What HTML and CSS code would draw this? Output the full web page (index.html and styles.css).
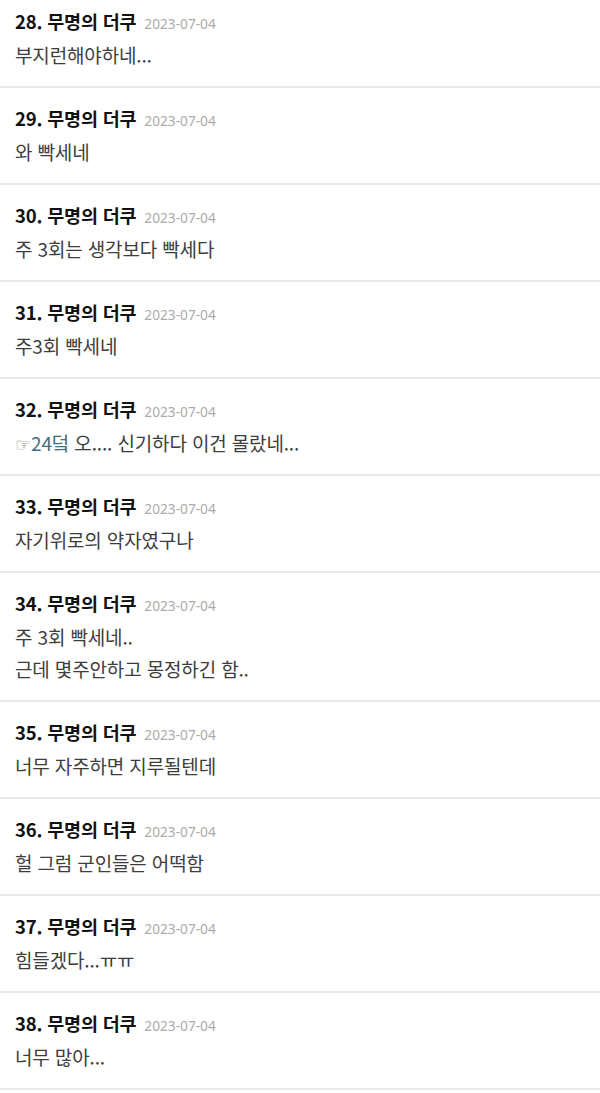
FILE: index.html
```html
<!DOCTYPE html>
<html lang="ko">
<head>
<meta charset="utf-8">
<link rel="stylesheet" href="styles.css">
</head>
<body>
<ul class="comments">
  <li class="comment"><div class="head"><span class="name">28. 무명의 더쿠</span><span class="date">2023-07-04</span></div><div class="body">부지런해야하네...</div></li>
  <li class="comment"><div class="head"><span class="name">29. 무명의 더쿠</span><span class="date">2023-07-04</span></div><div class="body">와 빡세네</div></li>
  <li class="comment"><div class="head"><span class="name">30. 무명의 더쿠</span><span class="date">2023-07-04</span></div><div class="body">주 3회는 생각보다 빡세다</div></li>
  <li class="comment"><div class="head"><span class="name">31. 무명의 더쿠</span><span class="date">2023-07-04</span></div><div class="body">주3회 빡세네</div></li>
  <li class="comment"><div class="head"><span class="name">32. 무명의 더쿠</span><span class="date">2023-07-04</span></div><div class="body"><span class="ref"><span class="hand">☞</span>24덬</span> 오.... 신기하다 이건 몰랐네...</div></li>
  <li class="comment"><div class="head"><span class="name">33. 무명의 더쿠</span><span class="date">2023-07-04</span></div><div class="body">자기위로의 약자였구나</div></li>
  <li class="comment"><div class="head"><span class="name">34. 무명의 더쿠</span><span class="date">2023-07-04</span></div><div class="body">주 3회 빡세네..<br>근데 몇주안하고 몽정하긴 함..</div></li>
  <li class="comment"><div class="head"><span class="name">35. 무명의 더쿠</span><span class="date">2023-07-04</span></div><div class="body">너무 자주하면 지루될텐데</div></li>
  <li class="comment"><div class="head"><span class="name">36. 무명의 더쿠</span><span class="date">2023-07-04</span></div><div class="body">헐 그럼 군인들은 어떡함</div></li>
  <li class="comment"><div class="head"><span class="name">37. 무명의 더쿠</span><span class="date">2023-07-04</span></div><div class="body">힘들겠다...ㅠㅠ</div></li>
  <li class="comment"><div class="head"><span class="name">38. 무명의 더쿠</span><span class="date">2023-07-04</span></div><div class="body">너무 많아...</div></li>
</ul>
</body>
</html>
```

FILE: styles.css
```css
html, body {
  margin: 0;
  padding: 0;
  background: #ffffff;
}
body {
  font-family: "Noto Sans CJK KR", "Noto Sans", sans-serif;
  overflow: hidden;
}
.comments {
  list-style: none;
  margin: -9px 0 0 0;
  padding: 0;
}
.comment {
  padding: 12px 15px 15px 15px;
  border-bottom: 2px solid #e9e9e9;
}
.head {
  display: flex;
  align-items: baseline;
  gap: 8px;
  height: 36px;
  line-height: 36px;
}
.name {
  font-size: 18.5px;
  font-weight: 700;
  color: #111111;
  letter-spacing: -0.2px;
}
.date {
  font-size: 13.7px;
  color: #ababab;
  font-family: "Noto Sans", "Noto Sans CJK KR", sans-serif;
}
.body {
  font-size: 19px;
  line-height: 32px;
  color: #3d3d3d;
  letter-spacing: -0.15px;
}
.ref {
  color: #3f6f7c;
}
.hand {
  color: #8a8a8a;
  font-size: 18px;
  line-height: 0;
  font-family: "DejaVu Sans", sans-serif;
}
```
